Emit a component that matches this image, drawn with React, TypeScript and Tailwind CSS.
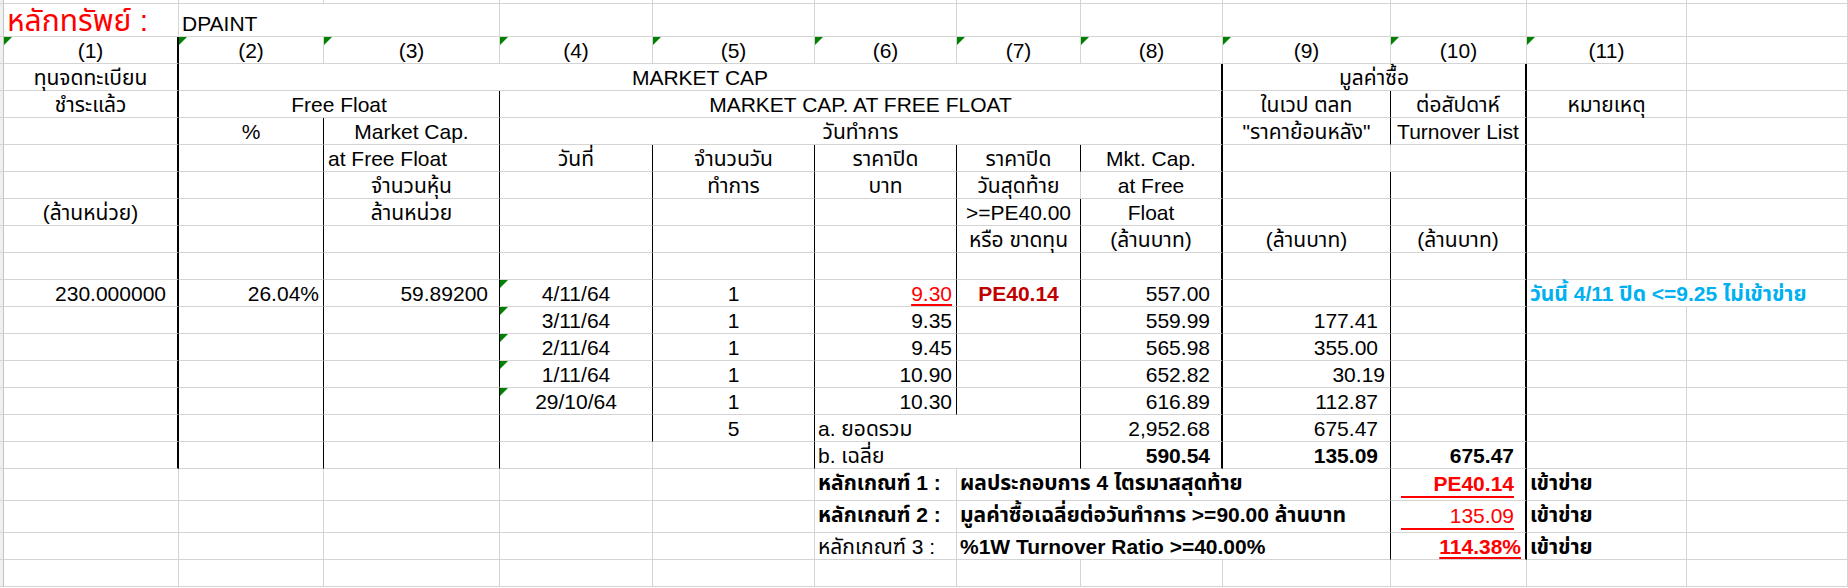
import React from "react";

type Edge = "g" | "b" | "t" | "n";
type Align = "l" | "c" | "r";

const RIGHT: Record<Edge, string> = {
  g: "border-r border-r-[#d4d4d4]",
  b: "border-r border-r-black",
  t: "border-r-2 border-r-black",
  n: "",
};

const ALIGN: Record<Align, string> = {
  l: "text-left pl-[3px]",
  c: "text-center",
  r: "text-right",
};

// green "number stored as text" marker
function Tri() {
  return (
    <svg className="absolute left-0 top-0" width="8" height="8" viewBox="0 0 8 8">
      <polygon points="0,0 8,0 0,8" fill="#008000" />
    </svg>
  );
}

function C({
  children,
  span,
  r = "g",
  a = "c",
  pr = "pr-[4px]",
  tri,
  className = "",
}: {
  children?: React.ReactNode;
  span?: number;
  r?: Edge;
  a?: Align;
  pr?: string;
  tri?: boolean;
  className?: string;
}) {
  return (
    <td
      colSpan={span}
      className={`relative p-0 align-bottom whitespace-nowrap border-b border-b-[#d4d4d4] ${RIGHT[r]} ${ALIGN[a]} ${
        a === "r" ? pr : ""
      } ${className}`}
    >
      {tri && <Tri />}
      {children}
    </td>
  );
}

function Strip() {
  return <td className="p-0 bg-[#f0f0f0] border-r border-r-[#c4c4c4] border-b border-b-[#d4d4d4]" />;
}

// empty cells with the given right edges
function Empty({ edges }: { edges: Edge[] }) {
  return (
    <>
      {edges.map((e, i) => (
        <C key={i} r={e} />
      ))}
    </>
  );
}

const WIDTHS = [
  "w-[4px]",
  "w-[175px]",
  "w-[145px]",
  "w-[176px]",
  "w-[153px]",
  "w-[162px]",
  "w-[142px]",
  "w-[124px]",
  "w-[142px]",
  "w-[168px]",
  "w-[136px]",
  "w-[160px]",
  "w-[161px]",
];

const ALLG: Edge[] = ["g", "g", "g", "g", "g", "g", "g", "g", "g", "g", "g", "g"];

const DATA = [
  { d: "4/11/64", p: "9.30", m: "557.00", v: "" },
  { d: "3/11/64", p: "9.35", m: "559.99", v: "177.41" },
  { d: "2/11/64", p: "9.45", m: "565.98", v: "355.00" },
  { d: "1/11/64", p: "10.90", m: "652.82", v: "30.19" },
  { d: "29/10/64", p: "10.30", m: "616.89", v: "112.87" },
];

export default function App() {
  return (
    <div className="w-[1848px] h-[588px] overflow-hidden bg-white text-black font-['Liberation_Sans','Noto_Sans_Thai',Tahoma,sans-serif] text-[21px] leading-[24px]">
      <table className="table-fixed border-separate border-spacing-0 w-[1848px]">
        <colgroup>
          {WIDTHS.map((w, i) => (
            <col key={i} className={w} />
          ))}
        </colgroup>
        <tbody>
          <tr className="h-[4px]">
            <Strip />
            <Empty edges={ALLG} />
          </tr>

          {/* title */}
          <tr className="h-[33px]">
            <Strip />
            <C a="l" className="text-[30px] leading-[30px] text-[#ff0000]">
              หลักทรัพย์ :
            </C>
            <C span={2} a="l">
              DPAINT
            </C>
            <Empty edges={["g", "g", "g", "g", "g", "g", "g", "g", "g"]} />
          </tr>

          {/* column numbers */}
          <tr className="h-[27px]">
            <Strip />
            <C r="t" tri>(1)</C>
            <C tri>(2)</C>
            <C tri>(3)</C>
            <C tri>(4)</C>
            <C tri>(5)</C>
            <C tri>(6)</C>
            <C tri>(7)</C>
            <C tri>(8)</C>
            <C tri>(9)</C>
            <C tri>(10)</C>
            <C tri>(11)</C>
            <C />
          </tr>

          <tr className="h-[27px]">
            <Strip />
            <C r="t">ทุนจดทะเบียน</C>
            <C span={7} r="t">
              MARKET CAP
            </C>
            <C span={2} r="t">
              มูลค่าซื้อ
            </C>
            <C />
            <C />
          </tr>

          <tr className="h-[27px]">
            <Strip />
            <C r="t">ชำระแล้ว</C>
            <C span={2} r="b">
              Free Float
            </C>
            <C span={5} r="t">
              MARKET CAP. AT FREE FLOAT
            </C>
            <C r="b">ในเวป ตลท</C>
            <C r="t">ต่อสัปดาห์</C>
            <C>หมายเหตุ</C>
            <C />
          </tr>

          <tr className="h-[27px]">
            <Strip />
            <C r="t" />
            <C r="b">%</C>
            <C r="b">Market Cap.</C>
            <C span={5} r="t">
              วันทำการ
            </C>
            <C r="b">"ราคาย้อนหลัง"</C>
            <C r="t">Turnover List</C>
            <C />
            <C />
          </tr>

          <tr className="h-[27px]">
            <Strip />
            <C r="t" />
            <C r="b" />
            <C r="b" a="l" className="pl-[4px]">
              at Free Float
            </C>
            <C r="b">วันที่</C>
            <C r="b">จำนวนวัน</C>
            <C r="b">ราคาปิด</C>
            <C r="b">ราคาปิด</C>
            <C r="t">Mkt. Cap.</C>
            <C r="g" />
            <C r="t" />
            <C />
            <C />
          </tr>

          <tr className="h-[27px]">
            <Strip />
            <C r="t" />
            <C r="b" />
            <C r="b">จำนวนหุ้น</C>
            <C r="b" />
            <C r="b">ทำการ</C>
            <C r="b">บาท</C>
            <C r="g">วันสุดท้าย</C>
            <C r="t">at Free</C>
            <C r="b" />
            <C r="t" />
            <C />
            <C />
          </tr>

          <tr className="h-[27px]">
            <Strip />
            <C r="t">(ล้านหน่วย)</C>
            <C r="b" />
            <C r="b">ล้านหน่วย</C>
            <C r="b" />
            <C r="b" />
            <C r="b" />
            <C r="b">&gt;=PE40.00</C>
            <C r="t">Float</C>
            <C r="b" />
            <C r="t" />
            <C />
            <C />
          </tr>

          <tr className="h-[27px]">
            <Strip />
            <C r="t" />
            <C r="b" />
            <C r="b" />
            <C r="b" />
            <C r="b" />
            <C r="b" />
            <C r="b">หรือ ขาดทุน</C>
            <C r="t">(ล้านบาท)</C>
            <C r="b">(ล้านบาท)</C>
            <C r="t">(ล้านบาท)</C>
            <C />
            <C />
          </tr>

          <tr className="h-[27px]">
            <Strip />
            <Empty edges={["t", "b", "b", "b", "b", "b", "b", "t", "b", "t", "g", "g"]} />
          </tr>

          {/* daily rows */}
          {DATA.map((row, i) => (
            <tr key={row.d} className="h-[27px]">
              <Strip />
              <C r="t" a="r" pr="pr-[11px]">
                {i === 0 ? "230.000000" : ""}
              </C>
              <C r="b" a="r">
                {i === 0 ? "26.04%" : ""}
              </C>
              <C r="b" a="r" pr="pr-[11px]">
                {i === 0 ? "59.89200" : ""}
              </C>
              <C r="b" tri>
                {row.d}
              </C>
              <C r="b">1</C>
              <C r="b" a="r">
                {i === 0 ? (
                  <span className="text-[#ff0000] underline decoration-2 underline-offset-[3px]">{row.p}</span>
                ) : (
                  row.p
                )}
              </C>
              <C r="b" className="font-bold text-[#c00000]">
                {i === 0 ? "PE40.14" : ""}
              </C>
              <C r="t" a="r" pr="pr-[11px]">
                {row.m}
              </C>
              <C r="b" a="r" pr={row.v === "30.19" ? "pr-[5px]" : "pr-[12px]"}>
                {row.v}
              </C>
              <C r="t" />
              {i === 0 ? (
                <C span={2} a="l" className="font-bold text-[#00b0f0]">
                  วันนี้ 4/11 ปิด &lt;=9.25 ไม่เข้าข่าย
                </C>
              ) : (
                <>
                  <C />
                  <C />
                </>
              )}
            </tr>
          ))}

          <tr className="h-[27px]">
            <Strip />
            <C r="t" />
            <C r="b" />
            <C r="b" />
            <C r="b" />
            <C r="b">5</C>
            <C span={2} r="b" a="l">
              a. ยอดรวม
            </C>
            <C r="t" a="r" pr="pr-[11px]">
              2,952.68
            </C>
            <C r="b" a="r" pr="pr-[12px]">
              675.47
            </C>
            <C r="t" />
            <C />
            <C />
          </tr>

          <tr className="h-[27px]">
            <Strip />
            <C r="t" />
            <C r="b" />
            <C r="b" />
            <C r="g" />
            <C r="b" />
            <C span={2} r="b" a="l">
              b. เฉลี่ย
            </C>
            <C r="t" a="r" pr="pr-[11px]" className="font-bold">
              590.54
            </C>
            <C r="b" a="r" pr="pr-[12px]" className="font-bold">
              135.09
            </C>
            <C r="t" a="r" pr="pr-[11px]" className="font-bold">
              675.47
            </C>
            <C />
            <C />
          </tr>

          {/* criteria */}
          <tr className="h-[32px]">
            <Strip />
            <Empty edges={["g", "g", "g", "g", "g"]} />
            <C a="l" className="pb-[5px] font-bold">
              หลักเกณฑ์ 1 :
            </C>
            <C span={3} r="b" a="l" className="pb-[5px] font-bold">
              ผลประกอบการ 4 ไตรมาสสุดท้าย
            </C>
            <C r="t" a="r" pr="pr-0">
              <div className="ml-[10px] mr-[11px] mb-[2px] border-b-2 border-b-[#ff0000] font-bold text-[#ff0000]">
                PE40.14
              </div>
            </C>
            <C a="l" className="pb-[5px] font-bold">
              เข้าข่าย
            </C>
            <C />
          </tr>

          <tr className="h-[32px]">
            <Strip />
            <Empty edges={["g", "g", "g", "g", "g"]} />
            <C a="l" className="pb-[5px] font-bold">
              หลักเกณฑ์ 2 :
            </C>
            <C span={3} r="b" a="l" className="pb-[5px] font-bold">
              มูลค่าซื้อเฉลี่ยต่อวันทำการ &gt;=90.00 ล้านบาท
            </C>
            <C r="t" a="r" pr="pr-0">
              <div className="ml-[10px] mr-[11px] mb-[2px] border-b-2 border-b-[#ff0000] text-[#ff0000]">
                135.09
              </div>
            </C>
            <C a="l" className="pb-[5px] font-bold">
              เข้าข่าย
            </C>
            <C />
          </tr>

          <tr className="h-[27px]">
            <Strip />
            <Empty edges={["g", "g", "g", "g", "g"]} />
            <C a="l">หลักเกณฑ์ 3 :</C>
            <C span={3} r="b" a="l" className="font-bold">
              %1W Turnover Ratio &gt;=40.00%
            </C>
            <C r="t" a="r">
              <span className="font-bold text-[#ff0000] underline decoration-2 underline-offset-[3px]">114.38%</span>
            </C>
            <C a="l" className="font-bold">
              เข้าข่าย
            </C>
            <C />
          </tr>

          <tr className="h-[27px]">
            <Strip />
            <Empty edges={ALLG} />
          </tr>
        </tbody>
      </table>
    </div>
  );
}
